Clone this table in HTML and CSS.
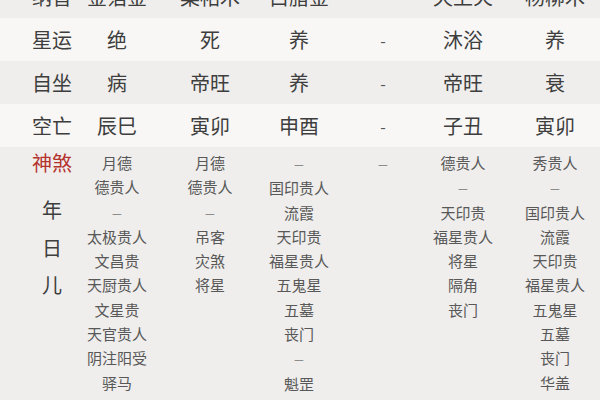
FILE: index.html
```html
<!DOCTYPE html>
<html lang="zh">
<head>
<meta charset="utf-8">
<link rel="stylesheet" href="styles.css">
</head>
<body>
<div class="chart">
  <div class="row grey">
    <div class="c1">纳音</div><div class="c2">金箔金</div><div>桑柘木</div><div>白腊金</div><div></div><div class="c6">天上火</div><div>杨柳木</div>
  </div>
  <div class="row light">
    <div class="c1">星运</div><div class="c2">绝</div><div>死</div><div>养</div><div class="hy">-</div><div class="c6">沐浴</div><div>养</div>
  </div>
  <div class="row grey">
    <div class="c1">自坐</div><div class="c2">病</div><div>帝旺</div><div>养</div><div class="hy">-</div><div class="c6">帝旺</div><div>衰</div>
  </div>
  <div class="row light">
    <div class="c1">空亡</div><div class="c2">辰巳</div><div>寅卯</div><div>申酉</div><div class="hy">-</div><div class="c6">子丑</div><div>寅卯</div>
  </div>
  <div class="row grey shensha">
    <div class="c1 label">
      <div class="red">神煞</div>
      <div class="vert first">年</div>
      <div class="vert">日</div>
      <div class="vert">儿</div>
    </div>
    <div class="c2 list">
      <div>月德</div><div>德贵人</div><div><span class="dash">—</span></div><div>太极贵人</div><div>文昌贵</div><div>天厨贵人</div><div>文星贵</div><div>天官贵人</div><div>阴注阳受</div><div>驿马</div><div>红艳</div>
    </div>
    <div class="list">
      <div>月德</div><div>德贵人</div><div><span class="dash">—</span></div><div>吊客</div><div>灾煞</div><div>将星</div>
    </div>
    <div class="list">
      <div><span class="dash">—</span></div><div>国印贵人</div><div>流霞</div><div>天印贵</div><div>福星贵人</div><div>五鬼星</div><div>五墓</div><div>丧门</div><div><span class="dash">—</span></div><div>魁罡</div><div>十恶大败</div>
    </div>
    <div class="list">
      <div><span class="dash">—</span></div>
    </div>
    <div class="c6 list">
      <div>德贵人</div><div><span class="dash">—</span></div><div>天印贵</div><div>福星贵人</div><div>将星</div><div>隔角</div><div>丧门</div>
    </div>
    <div class="list">
      <div>秀贵人</div><div><span class="dash">—</span></div><div>国印贵人</div><div>流霞</div><div>天印贵</div><div>福星贵人</div><div>五鬼星</div><div>五墓</div><div>丧门</div><div>华盖</div>
    </div>
  </div>
</div>
</body>
</html>
```

FILE: styles.css
```css
html, body {
  margin: 0;
  padding: 0;
  background: #f0efed;
  font-family: "Noto Sans CJK SC", "Noto Sans", sans-serif;
  overflow: hidden;
}
.chart {
  margin-top: -25px;
}
.row {
  display: grid;
  grid-template-columns: 84px 80px 92px 86px 82px 86px 90px;
  height: 43px;
  align-items: center;
  text-align: center;
  font-size: 20px;
  color: #3e3e3e;
  white-space: nowrap;
}
.grey {
  background: #efeeec;
}
.light {
  background: #f8f7f5;
}
.c1 {
  padding-left: 20px;
}
.c2 {
  padding-right: 14px;
}
.c6 {
  padding-right: 8px;
}
.hy {
  font-size: 16px;
  color: #555;
}
.shensha {
  height: auto;
  align-items: start;
  padding-top: 3px;
  border-top: 1px solid #ecebe9;
}
.label {
  line-height: 24.3px;
}
.red {
  color: #b5332e;
}
.vert {
  line-height: 37.5px;
  color: #3e3e3e;
}
.vert.first {
  margin-top: 16px;
}
.list {
  font-size: 15px;
  line-height: 24.3px;
  color: #585858;
}
.dash {
  font-size: 11px;
  color: #777;
}
```
